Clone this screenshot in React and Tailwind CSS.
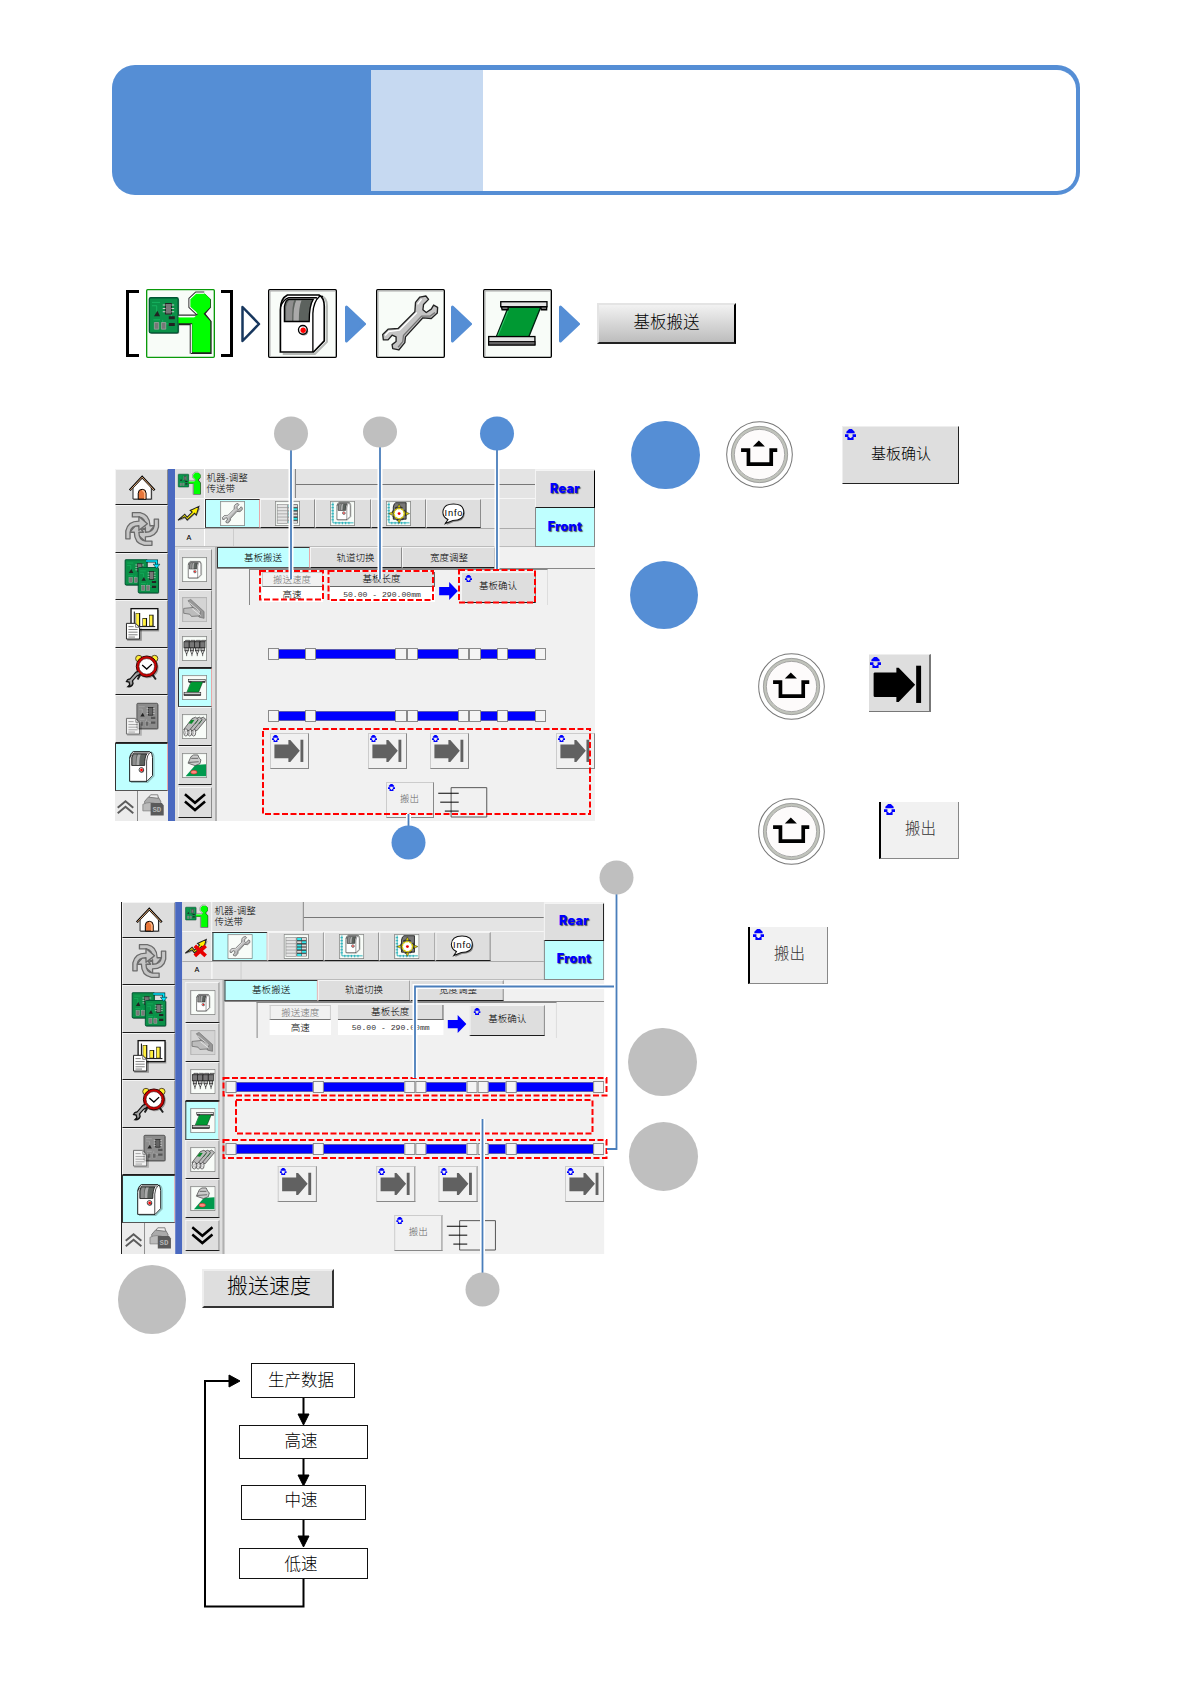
import clsx from "clsx";

const cell = "flex items-center justify-center border border-t-[#f4f4f4] border-l-[#f4f4f4] border-r-[#8c8c8c] border-b-[#1c1c1c] bg-[#dedede]";
const cellOn = "flex items-center justify-center border border-t-[#333] border-l-[#333] border-r-[#e8a8a8] border-b-[#555] bg-[#bfffff]";

/* ---------- drawings ---------- */

function BoardArt({ gray }) {
  const body = gray ? "#8c8c8c" : "#0b9148";
  const chip = gray ? "#666" : "#777";
  return (
    <g>
      <rect x="3" y="3" width="86" height="105" rx="5" fill="#0006" />
      <rect width="86" height="105" rx="4" fill={body} stroke={gray ? "#555" : "#053"} strokeWidth="4" />
      <path d="M8 14h24M8 24h14v22M66 50v10M40 66v12h34M12 66h20" stroke={gray ? "#bbb" : "#1cc36a"} strokeWidth="2" fill="none" />
      <rect x="48" y="17" width="18" height="32" fill={chip} stroke="#222" strokeWidth="3" />
      <path d="M40 22h8M40 32h8M40 42h8M66 22h8M66 32h8M66 42h8" stroke="#ccc" strokeWidth="3" />
      <path d="M14 55l10-16 8 16z" fill="#222" />
      <rect x="15" y="74" width="13" height="20" fill={chip} stroke="#aaa" strokeWidth="2" />
      <rect x="36" y="74" width="13" height="20" fill={chip} stroke="#aaa" strokeWidth="2" />
      <path d="M58 60h18M58 80h18" stroke={gray ? "#555" : "#222"} strokeWidth="9" />
    </g>
  );
}

function OperatorArt() {
  return (
    <g strokeLinejoin="round">
      <g transform="translate(10 26)">
        <BoardArt />
      </g>
      <path d="M176 14l18 17v24l-16 19 18 22v98h-62v-86H98v-8h60z" fill="#222" />
      <path d="M150 13h24l18 17v24l-20 20 20 22v93h-54V102H97V84h48l9-10-22-20V30z" fill="#00ff00" />
      <path d="M135 191v-86M97 82h46M150 72l-20-18V30l19-18h24" fill="none" stroke="#fff" strokeWidth="4" />
      <path d="M132 193v-88M97 78h52l5-4M150 76l-22-21V28l20-19h26" fill="none" stroke="#333" strokeWidth="3" />
    </g>
  );
}

function MachineArt() {
  return (
    <g>
      <path d="M44 194h96l36-36V50q0-22-14-28" fill="none" stroke="#0004" strokeWidth="6" />
      <path d="M37 188V62C37 40 46 24 58 18h94q16 8 16 34v103l-32 33z" fill="#fff" stroke="#000" strokeWidth="5" />
      <path d="M134 188V72q2-34 20-50l10 0M38 52q8-20 24-26h84" fill="none" stroke="#000" strokeWidth="4" />
      <path d="M49 97V52q3-18 12-21h74q-12 18-12 66z" fill="#5c625e" stroke="#000" strokeWidth="4" />
      <path d="M54 94V54q2-14 9-20h15q-6 12-6 60z" fill="#8e8e8e" />
      <path d="M76 94q-1-40 8-60h16q-8 18-8 60z" fill="#aaa" />
      <circle cx="107" cy="126" r="13" fill="#888" />
      <circle cx="104" cy="122" r="13" fill="#fff" stroke="#000" strokeWidth="4" />
      <circle cx="105" cy="123" r="8" fill="#f00" />
    </g>
  );
}

function WrenchArt() {
  return (
    <g strokeLinejoin="round">
      <path
        d="M131 24l18-3 8 10-15 15-2 16 10 8 15-10 7-12 12 7-1 17-18 16-25-2-52 57-2 17-18 22-18-4-2-12 12-9v-14l-12-5-12 14-14 0-2-16 16-16 30-2 50-50 2-28z"
        fill="#c4c4c4"
        stroke="#222"
        strokeWidth="4"
      />
      <path d="M124 46l12-16M122 70l-52 53-32 4-11 12" stroke="#fff" strokeWidth="4" fill="none" />
      <path d="M176 70l-14 11-26 0-54 58-2 18-14 17" stroke="#777" strokeWidth="4" fill="none" />
    </g>
  );
}

function BeltArt() {
  return (
    <g>
      <path d="M75 55h97l-35 87H40z" fill="#009933" stroke="#021" strokeWidth="4" />
      <path d="M78 58L44 140" stroke="#2fc468" strokeWidth="3" />
      <rect x="53" y="38" width="138" height="15" fill="#e4e4e4" stroke="#000" strokeWidth="4" />
      <path d="M55 53h20v9h-18zM172 53h18v9h-16z" fill="#777" stroke="#000" strokeWidth="4" />
      <rect x="17" y="142" width="138" height="25" fill="#e4e4e4" stroke="#000" strokeWidth="4" />
      <rect x="17" y="157" width="138" height="10" fill="#666" stroke="#000" strokeWidth="3" />
    </g>
  );
}

function Framed({ className, green, gray, children }) {
  return (
    <svg viewBox="0 0 206 206" className={className}>
      <rect x="2" y="2" width="202" height="202" rx="3" fill={gray ? "#d4d4d4" : "#f8fcf8"} stroke={green ? "#0a9a0a" : gray ? "#888" : "#000"} strokeWidth="4" />
      {!green && <path d="M6 200V6h194" fill="none" stroke="#aaa" strokeWidth="3" />}
      {children}
    </svg>
  );
}

function Lift({ className }) {
  return (
    <svg viewBox="0 0 32 32" className={className} fill="#0000ff">
      <path d="M12 0h8l8 8v4H4V8z" />
      <path d="M0 15h10v8h3v3h6v-3h3v-8h10v8h-7v9H7v-9H0z" />
    </svg>
  );
}

function Home() {
  return (
    <svg viewBox="0 0 156 105" className="w-[52px] h-[35px]">
      <path d="M55 58v33h56V55" fill="#0005" />
      <path d="M52 52l28-28 28 28v36H52z" fill="#fff" stroke="#222" strokeWidth="3" />
      <path d="M42 61l38-41 38 41" fill="none" stroke="#000" strokeWidth="7" />
      <path d="M44 60l36-39 36 39" fill="none" stroke="#eab07c" strokeWidth="3" />
      <path d="M68 88V70q0-12 12-12t12 12v18z" fill="#e8763a" stroke="#000" strokeWidth="3" />
      <path d="M88 88V70q-2-8-8-9" fill="none" stroke="#ffc090" strokeWidth="4" />
    </svg>
  );
}

function Swirl() {
  const arrow = "M50 20h24q30 6 30 40h14l-22 26-20-26h14q0-24-20-27H50z";
  return (
    <svg viewBox="0 0 156 140" className="w-[52px] h-[46px]" fill="#c6c6c6" stroke="#6b6b6b" strokeWidth="4" strokeLinejoin="round">
      {[0, 90, 180, 270].map((a) => (
        <path key={a} d={arrow} transform={`rotate(${a} 80 70)`} />
      ))}
    </svg>
  );
}

function Boards() {
  return (
    <svg viewBox="0 0 156 140" className="w-[52px] h-[46px]">
      <g transform="translate(28 20) scale(.78 .74)">
        <BoardArt />
      </g>
      <g transform="translate(68 44) scale(.72 .74)">
        <BoardArt />
      </g>
      <path d="M92 24h32v14" fill="none" stroke="#033" strokeWidth="9" />
      <path d="M92 24h32v14" fill="none" stroke="#00e5ff" strokeWidth="5" />
      <path d="M114 34h20l-10 13z" fill="#00e5ff" stroke="#033" strokeWidth="2" />
    </svg>
  );
}

function Doc() {
  return (
    <g>
      <path d="M34 118h42V84" fill="none" stroke="#0005" strokeWidth="6" />
      <path d="M32 68h28l12 12v36H32z" fill="#fff" stroke="#222" strokeWidth="3" />
      <path d="M60 68v12h12M38 78h16M38 87h28M38 95h28M38 103h28M38 110h20" fill="none" stroke="#666" strokeWidth="2.5" />
    </g>
  );
}

function Chart() {
  return (
    <svg viewBox="0 0 156 140" className="w-[52px] h-[46px]">
      <rect x="49" y="27" width="83" height="66" fill="#0004" />
      <rect x="46" y="23" width="82" height="64" fill="#fff" stroke="#111" strokeWidth="4" />
      <path d="M56 32v46h64" stroke="#000" strokeWidth="3" fill="none" />
      <path d="M67 76V36M88 76V52M108 76V42" stroke="#111" strokeWidth="14" />
      <path d="M66 75V38M87 75V54M107 75V44" stroke="#ffef40" strokeWidth="9" />
      <Doc />
    </svg>
  );
}

function Clock() {
  return (
    <svg viewBox="0 0 156 140" className="w-[52px] h-[46px]">
      <path d="M74 82l-8 14M112 82l10 14" stroke="#222" strokeWidth="6" />
      <circle cx="97" cy="59" r="33" fill="#0005" />
      <circle cx="70" cy="32" r="10" fill="#ffee30" stroke="#543" strokeWidth="3" />
      <circle cx="118" cy="32" r="10" fill="#ffee30" stroke="#543" strokeWidth="3" />
      <circle cx="94" cy="56" r="32" fill="#c00" stroke="#300" strokeWidth="3" />
      <circle cx="94" cy="56" r="24" fill="#fff" stroke="#400" strokeWidth="2" />
      <path d="M80 52l14 12 16-15" fill="none" stroke="#000" strokeWidth="4" />
      <path d="M62 80l-18 20" stroke="#111" strokeWidth="13" />
      <path d="M68 72q-12 0-10 12 10 4 16-6M50 98q-12-8-18 4l8 2 2 8-6 6q12 2 16-10z" fill="#999" stroke="#111" strokeWidth="4" />
      <path d="M62 80l-18 20" stroke="#aaa" strokeWidth="6" />
    </svg>
  );
}

function GrayBoard() {
  return (
    <svg viewBox="0 0 156 140" className="w-[52px] h-[46px]">
      <g transform="translate(64 22) scale(.74)">
        <BoardArt gray />
      </g>
      <g opacity=".6">
        <Doc />
      </g>
    </svg>
  );
}

function Bolt({ off }) {
  return (
    <svg viewBox="0 0 80 80" className="w-[27px] h-[27px]">
      <path d="M10 62l20-16 6 9 18-16-4-5 22-10-10 22-4-5-24 22-6-9z" fill="#0005" />
      <path d="M6 60l20-18 7 9 15-15-6-5 26-12-8 26-5-6-22 20-7-9z" fill="#fff000" stroke="#222" strokeWidth="3" />
      {off && <path d="M34 38l32 30M66 38L34 68" stroke="#e80000" strokeWidth="11" />}
    </svg>
  );
}

function TableIcon() {
  return (
    <Framed className="w-[25px] h-[25px]">
      <rect x="18" y="28" width="84" height="156" fill="#e4e4e4" stroke="#888" strokeWidth="5" />
      <path d="M18 54h84M18 80h84M18 106h84M18 132h84M18 158h84" stroke="#888" strokeWidth="5" />
      <rect x="106" y="28" width="82" height="156" fill="#333" />
      <path d="M110 42h36M110 94h36M110 120h36M110 172h36M150 68h34M150 146h34" stroke="#35e6ea" strokeWidth="17" />
      <path d="M150 42h34M150 94h34M150 120h34M150 172h34M110 68h36M110 146h36" stroke="#d8d8d8" strokeWidth="17" />
    </Framed>
  );
}

function Axes() {
  return <path d="M24 12v168h170M12 30h20M12 55h20M12 80h20M12 105h20M12 130h20M12 155h20M48 172v20M75 172v20M102 172v20M129 172v20M156 172v20" fill="none" stroke="#12a8b4" strokeWidth="7" />;
}

function AxesMachine() {
  return (
    <Framed className="w-[25px] h-[25px]">
      <Axes />
      <g transform="translate(26 -4) scale(.84)">
        <MachineArt />
      </g>
    </Framed>
  );
}

function AxesGear() {
  return (
    <Framed className="w-[25px] h-[25px]">
      <Axes />
      <path d="M60 150V50q4-30 20-36h86v136z" fill="#777" stroke="#000" strokeWidth="6" />
      <circle cx="108" cy="104" r="52" fill="none" stroke="#333" strokeWidth="16" strokeDasharray="20 21" />
      <circle cx="108" cy="104" r="42" fill="#fff" stroke="#d6c800" strokeWidth="12" strokeDasharray="20 6" />
      <path d="M108 24l14 28H94zM108 184l14-28H94zM22 104l30-14v28zM194 104l-30-14v28z" fill="#e6d800" stroke="#222" strokeWidth="4" />
      <circle cx="108" cy="104" r="12" fill="#e00" />
    </Framed>
  );
}

function Info() {
  return (
    <svg viewBox="0 0 75 70" className="w-[26px] h-[24px]">
      <path d="M22 55l-6 12 20-9q34 0 33-25T38 9Q8 9 7 33q0 15 15 22z" fill="#0006" />
      <path d="M20 51l-8 12 22-9q32 0 32-24T36 6Q6 6 5 30q0 14 15 21z" fill="#fff" stroke="#111" strokeWidth="3" />
      <text x="36" y="40" textAnchor="middle" fontSize="27" fontFamily="Liberation Sans, sans-serif" textLength="52" fill="#000">Info</text>
    </svg>
  );
}

function HandTool() {
  return (
    <Framed gray className="w-[25px] h-[25px]">
      <path d="M50 30l22-10 110 100v56l-40-10z" fill="#999" stroke="#666" strokeWidth="5" />
      <path d="M14 94l80-8 60 34-10 36-66 4-14-18-50-8z" fill="#bcbcbc" stroke="#666" strokeWidth="6" />
      <path d="M84 96l70 56M60 46l90 76" stroke="#eee" strokeWidth="6" />
    </Framed>
  );
}

function Nozzles() {
  return (
    <Framed className="w-[25px] h-[25px]">
      {[14, 58, 102, 146].map((x) => (
        <g key={x} transform={`translate(${x} 44)`} stroke="#111" strokeWidth="5">
          <path d="M4 4l12-12h34l-6 12z" fill="#ccc" />
          <rect x="2" y="4" width="42" height="50" fill="#777" />
          <rect x="10" y="54" width="28" height="24" fill="#bbb" />
          <path d="M12 78h24l-12 28z" fill="#fff" />
          <path d="M24 100v22" />
        </g>
      ))}
    </Framed>
  );
}

function Feeders() {
  return (
    <Framed className="w-[25px] h-[25px]">
      {[64, 32, 0].map((x) => (
        <g key={x} transform={`translate(${x} 0)`} stroke="#222" strokeWidth="5">
          <path d="M14 128L82 38l30-12 22 20-76 92z" fill="#bbb" />
          <path d="M54 76l24-28 24 2-22 30z" fill="#0a8a2a" stroke="none" />
          <ellipse cx="32" cy="152" rx="17" ry="30" fill="#eee" />
          <path d="M34 138q-10 16-2 30" fill="none" stroke="#888" />
        </g>
      ))}
    </Framed>
  );
}

function HeadUnit() {
  return (
    <Framed className="w-[25px] h-[25px]">
      <path d="M30 192L110 98l88-6v100z" fill="#00994d" />
      <path d="M50 84L74 30l22-14h34l14 30 12 10-8 32-40 16z" fill="#ccc" stroke="#444" strokeWidth="6" />
      <path d="M54 78l84-6M76 44h56" stroke="#666" strokeWidth="8" />
      <ellipse cx="98" cy="158" rx="26" ry="15" fill="#ff8a80" stroke="#d22" strokeWidth="5" />
    </Framed>
  );
}

function SdCard() {
  return (
    <svg viewBox="0 0 80 84" className="w-[24px] h-[25px]">
      <path d="M12 28l12-14h34l8 14v14H12z" fill="#aaa" stroke="#777" strokeWidth="3" />
      <path d="M26 14l6-8h24l2 12z" fill="#eee" stroke="#777" strokeWidth="3" />
      <path d="M6 38q24-12 48 0v22H6z" fill="#bbb" stroke="#888" strokeWidth="3" />
      <path d="M32 34h38l6 8v34H32z" fill="#5a5a5a" />
      <text x="53" y="65" textAnchor="middle" fontSize="25" fontWeight="700" fontFamily="Liberation Mono, monospace" fill="#b4b4b4">SD</text>
    </svg>
  );
}

function Chevrons({ up, className }) {
  return (
    <svg viewBox="0 0 70 64" className={clsx(className, up && "rotate-180")} fill="none" strokeWidth="8">
      <path d="M3 6l32 27L67 6M3 29l32 27 32-27" stroke={up ? "#5c5c5c" : "#000"} />
    </svg>
  );
}

function MachineIcon() {
  return (
    <svg viewBox="22 8 160 190" className="w-[28px] h-[35px]">
      <MachineArt />
    </svg>
  );
}

/* ---------- machine screen ---------- */

function ArrowButton() {
  return (
    <div className="relative w-[39px] h-[36px] shrink-0 border border-t-[#ccc] border-l-[#ccc] border-r-[#888] border-b-[#888] bg-[#f1f1f1]">
      <svg viewBox="0 0 115 107" className="w-[37px] h-[34px]" fill="#616161">
        <path d="M10 33h44V19h6l30 34-30 35h-6V76H10z" />
        <path d="M92 18h9v70h-9z" />
      </svg>
      <Lift className="absolute left-px top-px w-[7px] h-[7px]" />
    </div>
  );
}

// gaps are the lengths of the blue belt sections between the sensor squares
function Conveyor({ gaps }) {
  return (
    <div className="flex items-center h-[12px]">
      {gaps.map((g, i) => (
        <div key={i} className="flex items-center">
          <div className="h-[10px] bg-[#0000ff] border-y border-[#5a5ab0]" style={{ width: g }} />
          <div className="w-[11.2px] h-[12px] border border-[#8a8a8a] bg-[#f4f4f4]" />
        </div>
      ))}
    </div>
  );
}

const sideIcons = [Swirl, Boards, Chart, Clock, GrayBoard];

function Screen({ off, gaps, shift, className }) {
  return (
    <div className={clsx("flex w-[480.5px] h-[352px] bg-[#f1f1f1] overflow-hidden text-[9.5px] leading-none text-black", className)}>
      <div className="w-[53px] shrink-0 flex flex-col">
        <div className={clsx(cell, "h-[36px]")}>
          <Home />
        </div>
        {sideIcons.map((Icon, i) => (
          <div key={i} className={clsx(cell, "h-[47.5px]")}>
            <Icon />
          </div>
        ))}
        <div className={clsx(cellOn, "h-[48px]")}>
          <MachineIcon />
        </div>
        <div className="flex flex-1">
          <div className="w-[23px] flex items-center justify-center border-r border-[#888] bg-[#ececec] pt-[3px]">
            <Chevrons up className="w-[17px] h-[18px]" />
          </div>
          <div className="flex-1 flex items-center justify-center bg-[#ececec]">
            <SdCard />
          </div>
        </div>
      </div>
      <div className="w-[7px] shrink-0 bg-[#4a69c0]" />

      <div className="flex-1 flex flex-col">
        <div className="flex h-[78px]">
          <div className="flex-1 flex flex-col bg-[#e4e4e4]">
            <div className="flex h-[30px] border-b border-[#f6f6f6]">
              <div className="w-[30px] flex items-center justify-center bg-[#dedede] border-r border-white">
                <svg viewBox="0 0 206 206" className="w-[25px] h-[25px]">
                  <OperatorArt />
                </svg>
              </div>
              <div className="w-[91px] pl-[2px] pt-[3px] leading-[11px] bg-[#dedede] border-r border-[#888]">
                <div>机器-调整</div>
                <div>传送带</div>
              </div>
              <div className="flex-1">
                <div className="h-[16px] border-b border-[#777]" />
              </div>
            </div>
            <div className="flex h-[30px] border-b border-[#aaa]">
              <div className="w-[30px] flex items-center justify-center border-r border-white">
                <Bolt off={off} />
              </div>
              <div className={clsx(cellOn, "w-[55.4px]")}>
                <Framed className="w-[25px] h-[25px]">
                  <WrenchArt />
                </Framed>
              </div>
              <div className={clsx(cell, "w-[55.4px]")}><TableIcon /></div>
              <div className={clsx(cell, "w-[55.4px]")}><AxesMachine /></div>
              <div className={clsx(cell, "w-[55.4px]")}><AxesGear /></div>
              <div className={clsx(cell, "w-[55.4px]")}><Info /></div>
            </div>
            <div className="flex flex-1 border-b border-[#bbb]">
              <div className="w-[30px] flex items-center justify-center border-r border-white font-['Liberation_Mono',monospace] text-[8px]">A</div>
              <div className="w-[29px] border-r border-[#ccc]" />
            </div>
          </div>
          <div className="w-[60px] flex flex-col pt-px font-['Inter',sans-serif] font-black text-[12.5px] tracking-[0.3px] text-[#0000ff] [text-shadow:1px_1px_1px_#555]">
            <div className={clsx(cell, "h-[38px] border-r-black")}>Rear</div>
            <div className="flex-1 flex items-center justify-center bg-[#bfffff] border border-t-0 border-[#888]">Front</div>
          </div>
        </div>

        <div className="flex flex-1">
          <div className="w-[42px] shrink-0 flex flex-col pl-[3px] pr-[3px] pt-[2px] bg-[#dedede] border-r-2 border-[#b0b0b0]">
            <div className={clsx(cell, "h-[41px]")}>
              <Framed className="w-[25px] h-[25px]">
                <g transform="translate(22 22) scale(.8)">
                  <MachineArt />
                </g>
              </Framed>
            </div>
            <div className={clsx(cell, "h-[39px]")}><HandTool /></div>
            <div className={clsx(cell, "h-[39px]")}><Nozzles /></div>
            <div className={clsx(cellOn, "h-[39px]")}>
              <Framed className="w-[25px] h-[25px]"><BeltArt /></Framed>
            </div>
            <div className={clsx(cell, "h-[39px]")}><Feeders /></div>
            <div className={clsx(cell, "h-[39px]")}><HeadUnit /></div>
            <div className={clsx(cell, "mt-[2px] h-[31px]")}>
              <Chevrons className="w-[22px] h-[21px]" />
            </div>
          </div>

          <div className="flex-1">
            <div className="flex h-[22px] border-b border-[#888]">
              <div className={clsx(cellOn, "w-[93px]")}>基板搬送</div>
              <div className={clsx(cell, "w-[92px]")}>轨道切换</div>
              <div className={clsx(cell, "w-[93px] pl-[2px]")}>宽度调整</div>
            </div>
            <div className="ml-[32px] w-[299px] h-[36px] flex border-l border-t border-[#888] border-r border-r-[#ddd] pt-[2px] pl-[12px]">
              <div className="w-[61px] text-center">
                <div className="h-[15px] leading-[13px] border border-[#ccc] border-b-[#777] text-[#777]">搬送速度</div>
                <div className="h-[15px] leading-[14px] bg-white">高速</div>
              </div>
              <div className="ml-[7px] w-[105px] text-center">
                <div className="h-[15px] leading-[13px] bg-[#dedede] border-r border-b border-[#666]">基板长度</div>
                <div className="h-[15px] leading-[16px] bg-white font-['Liberation_Mono',monospace] text-[8.1px] text-[#333] whitespace-pre">50.00 - 290.00mm</div>
              </div>
              <svg viewBox="0 0 56 54" className="ml-[4px] mt-[10px] w-[19px] h-[18px]" fill="#0000ff">
                <path d="M0 15h30V0l26 27-26 27V40H0z" />
              </svg>
              <div className={clsx(cell, "relative ml-[3px] w-[75px] h-[31px] pb-[3px]")}>
                <Lift className="absolute left-[3px] top-[2px] w-[7px] h-[7px]" />
                基板确认
              </div>
            </div>
            <div className={clsx("pt-[43px]", shift)}>
              <Conveyor gaps={gaps} />
              <div className="h-[50px]" />
              <Conveyor gaps={gaps} />
            </div>
            <div className="mt-[11px] ml-[53px] flex">
              <ArrowButton />
              <div className="w-[59px]" />
              <ArrowButton />
              <div className="w-[23px]" />
              <ArrowButton />
              <div className="w-[87px]" />
              <ArrowButton />
            </div>
            <div className="mt-[13px] ml-[169px] flex">
              <div className="relative w-[48px] h-[36px] flex items-center justify-center border border-[#ccc] border-r-[#888] border-b-[#888] text-[#666] pb-[2px]">
                <Lift className="absolute left-px top-px w-[7px] h-[7px]" />
                搬出
              </div>
              <svg viewBox="0 0 150 100" className="ml-[4px] mt-[4px] w-[50px] h-[33px]" fill="none" stroke="#555" strokeWidth="3">
                <path d="M39 5h108v89H39z" />
                <path d="M0 22h62M6 49h56M20 76h42" stroke="#000" />
              </svg>
            </div>
          </div>
        </div>
      </div>
    </div>
  );
}

/* ---------- manual page pieces ---------- */

function Disc({ className }) {
  return <div className={clsx("size-[68.5px] rounded-full shrink-0", className)} />;
}

function PanelKey({ className }) {
  return (
    <svg viewBox="0 0 200 200" className={clsx("size-[67px] shrink-0", className)} fill="none">
      <circle cx="100" cy="100" r="98" fill="#fff" stroke="#777" strokeWidth="3" />
      <circle cx="100" cy="100" r="80" fill="#fdfbfb" stroke="#c0c3bb" strokeWidth="9" />
      <circle cx="100" cy="100" r="84" stroke="#858585" strokeWidth="2" />
      <circle cx="100" cy="100" r="75" stroke="#858585" strokeWidth="2" />
      <path d="M45 87h22v42h68V87h18" stroke="#000" strokeWidth="11" />
      <path d="M80 76l18-18 18 18z" fill="#000" />
    </svg>
  );
}

function EjectButton({ className }) {
  return (
    <div className={clsx("relative w-[80px] h-[57px] flex items-center justify-center pb-[4px] border-l-2 border-l-black border-r border-b border-[#888] bg-[#f1f1f1] text-[15.5px] text-[#333]", className)}>
      <Lift className="absolute left-[3px] top-[2px] size-[11px]" />
      <span className="pl-[2px]">搬出</span>
    </div>
  );
}

function Next() {
  return (
    <svg viewBox="0 0 21 38" className="w-[21px] h-[38px] shrink-0">
      <path d="M1.500 2L19.500 19L1.500 36z" fill="#558ed5" stroke="#558ed5" strokeWidth="3" strokeLinejoin="round" />
    </svg>
  );
}

function Line({ d }) {
  return (
    <>
      <path d={d} fill="none" stroke="#fff" strokeWidth="5" />
      <path d={d} fill="none" stroke="#4a7ebb" strokeWidth="1.8" />
    </>
  );
}

// markers and leader lines lying over the two screens
function Callouts() {
  return (
    <svg viewBox="0 0 1190 1684" className="absolute inset-0 w-[1190px] h-[1684px] pointer-events-none">
      <g fill="none" stroke="#ff0000" strokeWidth="2" strokeDasharray="6 2.500">
        <rect x="260" y="571" width="63" height="28.500" />
        <rect x="328.500" y="571" width="104.500" height="29" />
        <rect x="459" y="570" width="76" height="32.500" />
        <rect x="263" y="729" width="327" height="85" />
        <rect x="223.500" y="1078" width="383" height="17.500" />
        <rect x="236" y="1100" width="356.500" height="33.500" />
        <rect x="223.500" y="1140" width="383" height="18" />
      </g>
      <Line d="M291 450V579" />
      <Line d="M380 446V579" />
      <Line d="M497 450V569" />
      <Line d="M408.500 814V828" />
      <Line d="M616.500 892V1149H607" />
      <Line d="M614 986.500H415V1078" />
      <Line d="M482.500 1119V1275" />
      <g fill="#bfbfbf">
        <circle cx="291" cy="433.500" r="17" />
        <ellipse cx="380" cy="432" rx="17" ry="15.500" />
        <circle cx="616.500" cy="877.500" r="17" />
        <circle cx="482.500" cy="1289.500" r="17" />
      </g>
      <g fill="#558ed5">
        <circle cx="497" cy="433.500" r="17" />
        <circle cx="408.500" cy="842.500" r="17" />
      </g>
    </svg>
  );
}

function Step({ className, children }) {
  return <div className={clsx("relative flex items-center justify-center border border-[#111] bg-white pr-[4px] text-[16.5px] leading-none", className)}>{children}</div>;
}

function SpeedCycle() {
  return (
    <div className="relative ml-[89px] mt-[29px] w-[170px] pl-[29px] h-[250px] flex flex-col items-center">
      <svg viewBox="0 0 170 250" className="absolute left-0 top-0 w-[170px] h-[250px]" fill="none" stroke="#000" strokeWidth="2">
        <path d="M99.500 216V243.500H1V18H26" />
        <path d="M99.500 34V52M99.500 95V113M99.500 156V174" />
        <path d="M25 12l11 6-11 6zM94 51h11l-5.500 11zM94 112h11l-5.500 11zM94 173h11l-5.500 11z" fill="#000" strokeWidth="1" />
      </svg>
      <Step className="w-[104px] h-[35px] pb-[2px]">生产数据</Step>
      <Step className="mt-[27px] w-[129px] h-[34px] pb-[2px]">高速</Step>
      <Step className="mt-[26px] w-[125px] h-[35px] pb-[5px]">中速</Step>
      <Step className="mt-[28px] w-[129px] h-[31px]">低速</Step>
    </div>
  );
}

export default function App() {
  return (
    <div className="relative w-[1190px] h-[1684px] overflow-hidden bg-white pt-[65px] text-black font-['Noto_Sans_CJK_SC',sans-serif] font-light">
      <header className="ml-[111.5px] w-[968.5px] h-[130px] flex p-[4.500px] rounded-[23px] bg-[#558ed5]">
        <div className="w-[255px]" />
        <div className="w-[112px] bg-[#c6d9f1]" />
        <div className="flex-1 bg-white rounded-r-[19px]" />
      </header>

      <nav className="ml-[126px] mt-[94px] h-[69px] flex items-center">
        <div className="w-[13px] h-[67px] border-[3px] border-r-0 border-black" />
        <Framed green className="ml-[7px] size-[69px]"><OperatorArt /></Framed>
        <div className="ml-[6px] w-[12px] h-[67px] border-[3px] border-l-0 border-black" />
        <svg viewBox="0 0 20 38" className="ml-[8px] w-[20px] h-[38px]">
          <path d="M1.500 2L18 19L1.500 36z" fill="#fff" stroke="#17375e" strokeWidth="2.500" strokeLinejoin="round" />
        </svg>
        <Framed className="ml-[7px] mr-[8px] size-[69px]"><MachineArt /></Framed>
        <Next />
        <Framed className="ml-[10px] mr-[6px] size-[69px]"><WrenchArt /></Framed>
        <Next />
        <Framed className="ml-[11px] mr-[7px] size-[69px]"><BeltArt /></Framed>
        <Next />
        <div className="ml-[17px] w-[139px] h-[41px] shrink-0 flex items-center justify-center border-2 border-t-[#e4e4e4] border-l-[#e4e4e4] border-r-black border-b-[#222] bg-linear-to-b from-[#f2f2f2] to-[#bdbdbd] pb-[4px] text-[16.5px]">
          基板搬送
        </div>
      </nav>

      <main className="flex pt-[55px]">
        <section className="ml-[114.5px] w-[513.5px] shrink-0 pt-[56px]">
          <Screen shift="ml-[51px]" gaps={[0, 26, 79.5, 0, 40.5, 0, 16.5, 26.5]} />
          <div className="h-[80.5px]" />
          <Screen
            off
            shift="ml-[1px]"
            gaps={[0, 76, 79.5, 0, 39.5, 0, 16.5, 76]}
            className="ml-[6.5px] origin-left scale-x-[1.0045] border-l border-[#222]"
          />
          <div className="mt-[11.5px] ml-[3px] flex items-start gap-[16px]">
            <Disc className="bg-[#bfbfbf]" />
            <div className="mt-[4px] w-[132px] h-[39px] flex items-center justify-center border-2 border-t-[#eee] border-l-[#eee] border-r-[#333] border-b-[#333] bg-[#dedede] pb-[7px] pl-[2px] text-[21px]">
              搬送速度
            </div>
          </div>
          <SpeedCycle />
        </section>

        <section className="flex-1 pt-[7.5px]">
          <div className="ml-[3px] flex items-center">
            <Disc className="bg-[#558ed5]" />
            <PanelKey className="ml-[26px]" />
            <div className="relative ml-[49px] w-[117px] h-[58px] flex items-center justify-center border border-[#eee] border-r-[#222] border-b-[#222] bg-[#dedede] pb-[4px] pl-[2px] text-[15px]">
              <Lift className="absolute left-[2px] top-[2px] size-[11px]" />
              基板确认
            </div>
          </div>
          <Disc className="mt-[71.5px] ml-[1.5px] bg-[#558ed5]" />
          <div className="ml-[130px] mt-[24px] flex items-center">
            <PanelKey />
            <div className="relative ml-[44px] mt-[-8px] w-[62px] h-[58px] border-t border-t-[#eee] border-r-2 border-b border-[#777] bg-[#dedede]">
              <svg viewBox="0 0 185 172" className="w-[61px] h-[57px]">
                <path d="M14 56q0-3 4-3h65V38h7l50 52-50 52h-7v-15H18q-4 0-4-4z" />
                <path d="M143 32h15v113h-15z" />
              </svg>
              <Lift className="absolute left-[1px] top-[2px] size-[11px]" />
            </div>
          </div>
          <div className="ml-[130px] mt-[78px] flex items-center">
            <PanelKey />
            <EjectButton className="ml-[54px] mt-[-2px]" />
          </div>
          <EjectButton className="ml-[120px] mt-[62px]" />
          <Disc className="mt-[43.5px] bg-[#bfbfbf]" />
          <Disc className="mt-[26px] ml-[1px] bg-[#bfbfbf]" />
        </section>
      </main>

      <Callouts />
    </div>
  );
}
